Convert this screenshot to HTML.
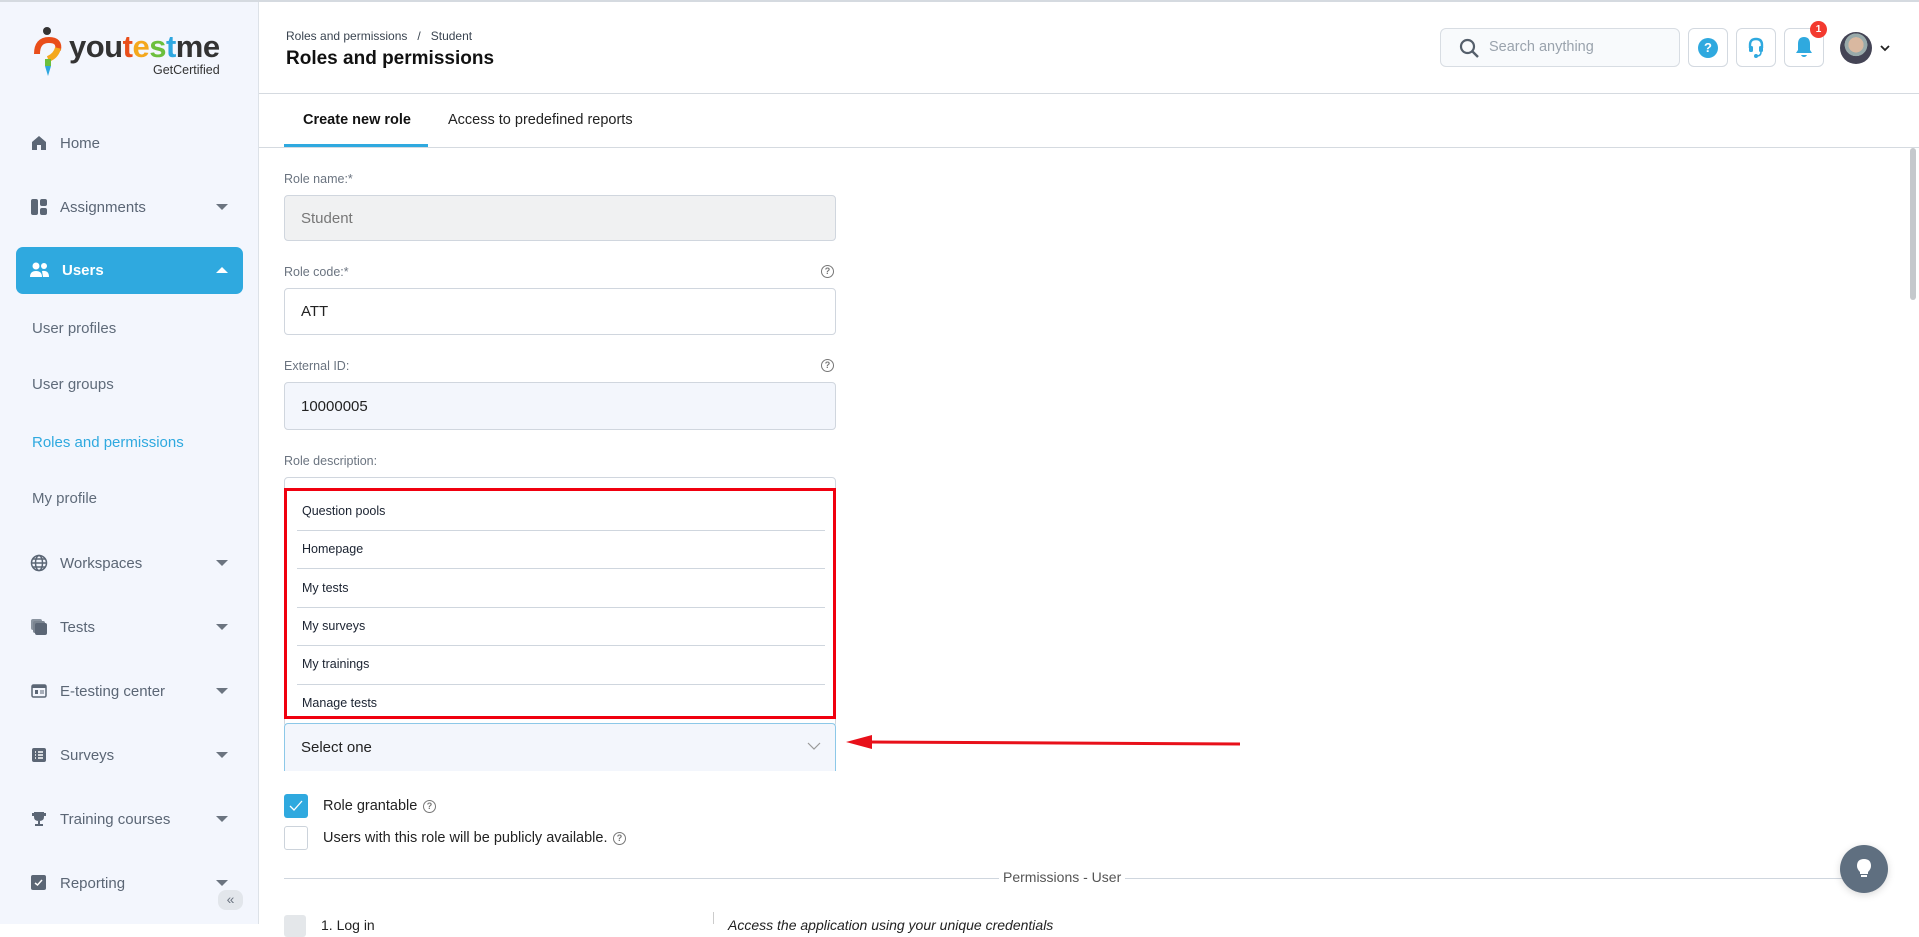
<!DOCTYPE html>
<html><head><meta charset="utf-8"><style>
*{box-sizing:border-box;margin:0;padding:0}
body{width:1919px;height:924px;overflow:hidden;background:#fff;font-family:"Liberation Sans",Arial,sans-serif;position:relative;color:#1f2a37}
.a{position:absolute}
#top{left:0;top:0;width:1919px;height:2px;background:#d5dae0}
#side{left:0;top:2px;width:259px;height:922px;background:#f3f6fd;border-right:1px solid #dde2e8}
.nav{position:absolute;left:30px;font-size:15px;color:#5b6675;display:flex;align-items:center;height:24px}
.nav svg{margin-right:12px}
.caret{position:absolute;left:216px;width:0;height:0;border-left:6px solid transparent;border-right:6px solid transparent;border-top:6px solid #6b7480}
.sub{position:absolute;left:32px;font-size:15px;color:#5f6b7a}
.lbl{position:absolute;left:284px;font-size:12.5px;color:#6b7480}
.inp{position:absolute;left:284px;width:552px;border:1px solid #d0d6de;border-radius:4px;font-size:15px;color:#222;padding-left:16px;display:flex;align-items:center}
.help{position:absolute;width:13px;height:13px;border:1.3px solid #777;border-radius:50%;font-size:9px;color:#777;text-align:center;line-height:11px;font-weight:bold}
.item{position:absolute;left:302px;font-size:12.5px;color:#1a2230}
.sep{position:absolute;left:297px;width:528px;height:1px;background:#cfd6de}
.ib{position:absolute;top:28px;width:40px;height:39px;border:1px solid #d3d9e0;border-radius:6px;background:#fff}
</style></head><body>
<div class="a" id="top"></div>
<div class="a" id="side"></div>
<svg class="a" style="left:34px;top:26px" width="30" height="52" viewBox="0 0 30 52">
<circle cx="13" cy="5" r="4" fill="#333"/>
<path d="M3 28 Q3 14 15 14 Q26 14 24 24" stroke="#e94e1b" stroke-width="6" fill="none"/>
<path d="M24 22 Q22 30 14 33" stroke="#f4a81d" stroke-width="6" fill="none"/>
<path d="M14 33 L14 40" stroke="#6cbf3d" stroke-width="6"/>
<path d="M11 40 L17 40 L14 50 Z" fill="#2ea7e0"/>
</svg>
<div class="a" style="left:69px;top:29px;font-size:31px;font-weight:bold;letter-spacing:-0.5px;color:#333">you<span style="color:#e94e1b">t</span><span style="color:#f4a81d">e</span><span style="color:#6cbf3d">s</span><span style="color:#2ea7e0">t</span>me</div>
<div class="a" style="left:153px;top:63px;font-size:12.5px;color:#333">GetCertified</div>

<div class="nav" style="top:131px"><svg width="18" height="18" viewBox="0 0 18 18"><path d="M2 8 L9 2 L16 8 V16 H11 V11 H7 V16 H2Z" fill="#5b6675"/></svg>Home</div>
<div class="nav" style="top:195px"><svg width="18" height="18" viewBox="0 0 18 18"><rect x="1" y="1" width="7" height="16" rx="2" fill="#5b6675"/><rect x="10" y="1" width="7" height="7" rx="2" fill="#5b6675"/><rect x="10" y="10" width="7" height="7" rx="2" fill="#5b6675"/></svg>Assignments</div><div class="caret" style="top:204px"></div>
<div class="a" style="left:16px;top:247px;width:227px;height:47px;background:#2fa9df;border-radius:7px"></div>
<div class="nav" style="top:258px;color:#fff;font-weight:bold"><svg width="20" height="18" viewBox="0 0 20 18"><circle cx="6" cy="5" r="3.5" fill="#fff"/><circle cx="14" cy="5" r="3" fill="#fff"/><path d="M0 16 Q0 10 6 10 Q12 10 12 16Z" fill="#fff"/><path d="M12 10 Q19 9 19 16 H13Z" fill="#fff"/></svg>Users</div>
<div class="caret" style="top:267px;border-top:none;border-bottom:6px solid #fff"></div>
<div class="sub" style="top:320px">User profiles</div>
<div class="sub" style="top:376px">User groups</div>
<div class="sub" style="top:434px;color:#2fa9df">Roles and permissions</div>
<div class="sub" style="top:490px">My profile</div>
<div class="nav" style="top:551px"><svg width="18" height="18" viewBox="0 0 18 18" fill="none" stroke="#5b6675" stroke-width="1.5"><circle cx="9" cy="9" r="7.5"/><ellipse cx="9" cy="9" rx="3.5" ry="7.5"/><path d="M1.5 9H16.5M3 5H15M3 13H15"/></svg>Workspaces</div><div class="caret" style="top:560px"></div>
<div class="nav" style="top:615px"><svg width="18" height="18" viewBox="0 0 18 18"><rect x="1" y="1" width="11" height="11" rx="2" fill="#8a94a0"/><rect x="3" y="3" width="12" height="12" rx="2" fill="#7a8490"/><rect x="5" y="5" width="12" height="12" rx="2" fill="#5b6675"/></svg>Tests</div><div class="caret" style="top:624px"></div>
<div class="nav" style="top:679px"><svg width="18" height="18" viewBox="0 0 18 18"><rect x="2" y="3" width="14" height="12" rx="1.5" fill="none" stroke="#5b6675" stroke-width="1.5"/><rect x="2" y="3" width="14" height="3" fill="#5b6675"/><rect x="5" y="8" width="3" height="4" fill="#5b6675"/><path d="M10 9H14M10 11H14" stroke="#5b6675"/></svg>E-testing center</div><div class="caret" style="top:688px"></div>
<div class="nav" style="top:743px"><svg width="18" height="18" viewBox="0 0 18 18"><rect x="2" y="2" width="14" height="14" rx="2" fill="#5b6675"/><path d="M5 6H6M8 6H13M5 9H6M8 9H13M5 12H6M8 12H13" stroke="#fff" stroke-width="1.4"/></svg>Surveys</div><div class="caret" style="top:752px"></div>
<div class="nav" style="top:807px"><svg width="18" height="18" viewBox="0 0 18 18"><path d="M4 2H14V7Q14 11 9 11Q4 11 4 7Z M2 3H4V6H2Z M14 3H16V6H14Z M8 11H10V14H8Z M5 14H13V16H5Z" fill="#5b6675"/></svg>Training courses</div><div class="caret" style="top:816px"></div>
<div class="nav" style="top:871px"><svg width="18" height="18" viewBox="0 0 18 18"><rect x="1" y="1" width="15" height="15" rx="2" fill="#5b6675"/><path d="M5 9L7.5 11L12 6" stroke="#fff" stroke-width="1.5" fill="none"/></svg>Reporting</div><div class="caret" style="top:880px"></div>
<div class="a" style="left:218px;top:890px;width:25px;height:20px;border-radius:8px;background:#e2e6eb;font-size:14px;color:#6b7480;text-align:center;line-height:19px">«</div>

<div class="a" style="left:286px;top:29px;font-size:12px;color:#3a4450">Roles and permissions &nbsp;&nbsp;/&nbsp;&nbsp; Student</div>
<div class="a" style="left:286px;top:48px;font-size:19px;font-weight:bold;color:#111">Roles and permissions</div>
<div class="a" style="left:1440px;top:28px;width:240px;height:39px;border:1px solid #d8dde3;border-radius:6px;background:#f8fafc"></div>
<svg class="a" style="left:1459px;top:38px" width="21" height="21" viewBox="0 0 21 21"><circle cx="8.5" cy="8.5" r="6.5" fill="none" stroke="#555f6b" stroke-width="2.2"/><path d="M13 13L19 19" stroke="#555f6b" stroke-width="2.4"/></svg>
<div class="a" style="left:1489px;top:39px;font-size:14.5px;color:#9aa3ad">Search anything</div>
<div class="ib" style="left:1688px"></div><div class="a" style="left:1698px;top:38px;width:20px;height:20px;border-radius:50%;background:#2fa9df;color:#fff;font-size:13px;font-weight:bold;text-align:center;line-height:20px">?</div>
<div class="ib" style="left:1736px"></div>
<svg class="a" style="left:1746px;top:37px" width="20" height="22" viewBox="0 0 20 22"><path d="M4 11V8Q4 2 10 2Q16 2 16 8V11" fill="none" stroke="#2fa9df" stroke-width="2.4"/><rect x="3" y="9" width="4" height="6" rx="1.5" fill="#2fa9df"/><rect x="13" y="9" width="4" height="6" rx="1.5" fill="#2fa9df"/><path d="M15 15Q15 19 11 19" fill="none" stroke="#2fa9df" stroke-width="1.6"/><circle cx="10" cy="19" r="2" fill="#2fa9df"/></svg>
<div class="ib" style="left:1784px"></div>
<svg class="a" style="left:1794px;top:36px" width="20" height="23" viewBox="0 0 20 23"><path d="M10 1Q16 1 16 8V14L18 17H2L4 14V8Q4 1 10 1Z" fill="#2fa9df"/><path d="M7 19H13Q12 21 10 21Q8 21 7 19Z" fill="#2fa9df"/></svg>
<div class="a" style="left:1810px;top:21px;width:17px;height:17px;border-radius:50%;background:#f33a2f;color:#fff;font-size:10px;font-weight:bold;text-align:center;line-height:17px">1</div>
<div class="a" style="left:1840px;top:32px;width:32px;height:32px;border-radius:50%;background:radial-gradient(circle at 50% 40%,#d9b8a0 0 30%,#9aa 31% 45%,#445 46%)"></div>
<svg class="a" style="left:1879px;top:44px" width="12" height="8" viewBox="0 0 12 8"><path d="M2 2L6 6L10 2" stroke="#222" stroke-width="1.8" fill="none"/></svg>
<div class="a" style="left:259px;top:93px;width:1660px;height:1px;background:#d5dae0"></div>

<div class="a" style="left:303px;top:112px;font-size:14.5px;font-weight:bold;color:#111">Create new role</div>
<div class="a" style="left:448px;top:112px;font-size:14.5px;color:#222">Access to predefined reports</div>
<div class="a" style="left:284px;top:144px;width:144px;height:3px;background:#2fa9df"></div>
<div class="a" style="left:259px;top:147px;width:1660px;height:1px;background:#d5dae0"></div>
<div class="a" style="left:1910px;top:148px;width:6px;height:152px;border-radius:3px;background:#c5c8cc"></div>

<div class="lbl" style="top:172px">Role name:*</div>
<div class="inp" style="top:195px;height:46px;background:#f0f1f2;color:#777">Student</div>
<div class="lbl" style="top:265px">Role code:*</div><div class="help" style="left:821px;top:265px">?</div>
<div class="inp" style="top:288px;height:47px">ATT</div>
<div class="lbl" style="top:359px">External ID:</div><div class="help" style="left:821px;top:359px">?</div>
<div class="inp" style="top:382px;height:48px;background:#f3f6fc">10000005</div>
<div class="lbl" style="top:454px">Role description:</div>
<div class="inp" style="top:477px;height:250px;background:#fff"></div>
<div class="a" style="left:284px;top:488px;width:552px;height:231px;border:3px solid #f0000f;background:#fff"></div>
<div class="item" style="top:504px">Question pools</div><div class="sep" style="top:530px"></div>
<div class="item" style="top:542px">Homepage</div><div class="sep" style="top:568px"></div>
<div class="item" style="top:581px">My tests</div><div class="sep" style="top:607px"></div>
<div class="item" style="top:619px">My surveys</div><div class="sep" style="top:645px"></div>
<div class="item" style="top:657px">My trainings</div><div class="sep" style="top:684px"></div>
<div class="item" style="top:696px">Manage tests</div>
<div class="inp" style="top:723px;height:48px;background:#f3f6fc;border-color:#8cc8e8;border-bottom:none;border-radius:4px 4px 0 0">Select one</div>
<svg class="a" style="left:807px;top:742px" width="14" height="9" viewBox="0 0 14 9"><path d="M1 1L7 7L13 1" stroke="#999" stroke-width="1.2" fill="none"/></svg>
<svg class="a" style="left:840px;top:730px" width="410" height="25" viewBox="0 0 410 25"><path d="M400 14 L30 12" stroke="#e8101a" stroke-width="3"/><path d="M6 12 L32 5 L32 19Z" fill="#e8101a"/></svg>

<div class="a" style="left:284px;top:794px;width:24px;height:24px;border-radius:3px;background:#2fa9df"></div>
<svg class="a" style="left:289px;top:800px" width="14" height="12" viewBox="0 0 14 12"><path d="M1 6L5 10L13 1" stroke="#fff" stroke-width="1.3" fill="none"/></svg>
<div class="a" style="left:323px;top:798px;font-size:14.5px;color:#222">Role grantable</div><div class="help" style="left:423px;top:800px">?</div>
<div class="a" style="left:284px;top:826px;width:24px;height:24px;border-radius:3px;border:1px solid #ccd3db;background:#fff"></div>
<div class="a" style="left:323px;top:830px;font-size:14.5px;color:#222">Users with this role will be publicly available.</div><div class="help" style="left:613px;top:832px">?</div>
<div class="a" style="left:284px;top:878px;width:1572px;height:1px;background:#cfd6de"></div>
<div class="a" style="left:999px;top:869px;padding:0 4px;background:#fff;font-size:14px;color:#555">Permissions - User</div>
<div class="a" style="left:284px;top:915px;width:22px;height:22px;border-radius:3px;background:#e4e7ea"></div>
<div class="a" style="left:321px;top:917px;font-size:14px;color:#222">1. Log in</div>
<div class="a" style="left:713px;top:912px;width:1px;height:12px;background:#ccc"></div>
<div class="a" style="left:728px;top:917px;font-size:14px;font-style:italic;color:#222">Access the application using your unique credentials</div>

<div class="a" style="left:1840px;top:845px;width:48px;height:48px;border-radius:50%;background:#5f6f80;box-shadow:0 2px 8px rgba(0,0,0,.15)"></div>
<svg class="a" style="left:1855px;top:858px" width="18" height="22" viewBox="0 0 18 22"><path d="M9 1Q16 1 16 8Q16 11 13 14V16H5V14Q2 11 2 8Q2 1 9 1Z" fill="#fff"/><rect x="6" y="17" width="6" height="2" fill="#fff"/></svg>
</body></html>
